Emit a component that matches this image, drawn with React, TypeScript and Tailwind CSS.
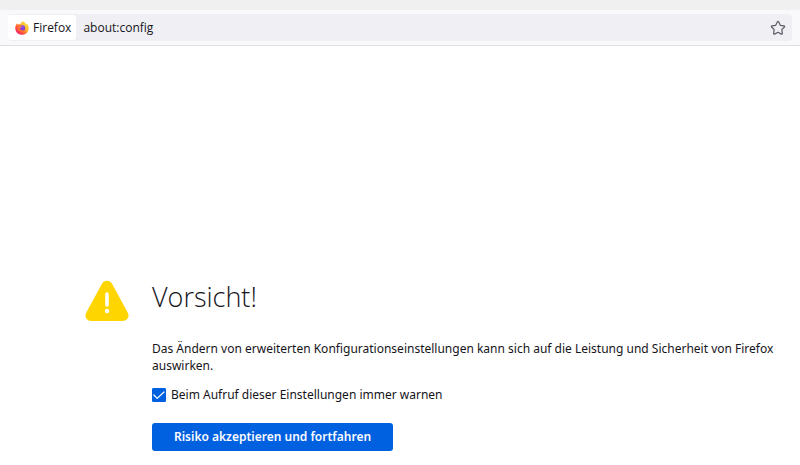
import { useState } from 'react';

const FirefoxLogo = () => (
  <svg viewBox="0 0 28 28" className="size-[14px] shrink-0" aria-hidden>
    <defs>
      <linearGradient id="flame" x1="0.9" y1="0.1" x2="0.15" y2="0.9">
        <stop offset="0" stopColor="#ffe44a" />
        <stop offset="0.4" stopColor="#ffb52b" />
        <stop offset="0.7" stopColor="#ff5a3a" />
        <stop offset="1" stopColor="#f0226e" />
      </linearGradient>
      <radialGradient id="globe" cx="0.5" cy="0.3" r="0.75">
        <stop offset="0" stopColor="#9059ff" />
        <stop offset="1" stopColor="#6a2fb8" />
      </radialGradient>
    </defs>
    <path
      d="M16.500 .5c3 2 5.400 4.500 6 7 1-.6 1.300-1.500 1.300-2.500 2.200 2.500 3.700 5.500 3.700 9.300C27.500 21.800 21.500 27.500 14 27.500S.5 21.800.5 14.300C.5 10.500 2 6.500 4.200 4.300c0 1.200.3 2.200.8 2.900 1.500-.8 3.500-.9 5-.2C11.500 4 13.500 1.800 16.500.5z"
      fill="url(#flame)"
    />
    <circle cx="14.500" cy="14.200" r="5.800" fill="url(#globe)" />
    <path
      d="M5 8.500c2.500-1.500 4.500-1 6 .3 1 .9 2 1 3.500 1.200-.3 1.600-1.800 2-3 2.400-.8 1.400-1.600 1.900-1.300 3.300.5 2 2.400 2.900 4.300 2.700 1.500-.2 2.500-1 3.800-.5-1.500 2.500-5 3.700-8 2.700C6.500 19.300 4 14 5 8.500z"
      fill="#ff7139"
    />
  </svg>
);

const StarIcon = () => (
  <svg viewBox="0 0 16 16" className="size-4" fill="none" stroke="#5b5b66" strokeWidth="1.200" strokeLinejoin="round" aria-hidden>
    <path d="M7.400 1.700a.7.7 0 0 1 1.200 0L10.300 5.300l3.700.5a.7.7 0 0 1 .4 1.200L11.800 9.700l.6 3.700a.7.7 0 0 1-1 .7L8 12.300l-3.400 1.800a.7.7 0 0 1-1-.7l.6-3.700L1.600 7A.7.7 0 0 1 2 5.800l3.700-.5z" />
  </svg>
);

const WarningIcon = () => (
  <svg viewBox="0 0 44 42" className="h-[42px] w-11 shrink-0" aria-hidden>
    <path
      d="M16.800 3.900C19.200-.3 24.800-.3 27.200 3.900l15.600 28.800c2.200 4-.6 8.300-5 8.300H6.200c-4.400 0-7.200-4.300-5-8.300z"
      fill="#ffd500"
    />
    <path d="M22 14v11" stroke="#fff" strokeWidth="3.600" strokeLinecap="round" />
    <circle cx="22" cy="31" r="2.200" fill="#fff" />
  </svg>
);

const AddressBar = () => {
  const [url, setUrl] = useState('about:config');

  return (
    <header className="border-b border-[#dfdfe3] bg-[#f9f9fb] font-['Open_Sans',sans-serif]">
      <div className="h-[10px] bg-[#f0f0f0]" />
      <div className="px-2 py-1">
        <div className="flex h-[27px] items-center rounded bg-[#f0f0f4] pr-1">
          <button type="button" className="flex h-[25px] items-center gap-1 rounded-[3px] bg-white pr-[5px] pl-[7px] text-[12px]">
            <FirefoxLogo />
            Firefox
          </button>
          <input
            type="text"
            value={url}
            onChange={e => setUrl(e.target.value)}
            aria-label="Adresse"
            className="min-w-0 flex-1 bg-transparent px-[7px] text-[12px] outline-none"
          />
          <button type="button" aria-label="Lesezeichen hinzufügen" className="flex size-5 items-center justify-center">
            <StarIcon />
          </button>
        </div>
      </div>
    </header>
  );
};

export default function App() {
  const [warn, setWarn] = useState(true);

  return (
    <div className="min-h-screen bg-white font-['Noto_Sans',sans-serif] text-[12px] text-[#15141a]">
      <AddressBar />
      <main className="flex gap-[23px] pt-[234px] pr-2 pl-[85px]">
        <WarningIcon />
        <div className="min-w-0 flex-1">
          <h1 className="font-['Open_Sans',sans-serif] text-[27px] leading-[34px] font-light">Vorsicht!</h1>
          <p className="mt-[26px] leading-[17px]">
            Das Ändern von erweiterten Konfigurationseinstellungen kann sich auf die Leistung und Sicherheit von Firefox
            auswirken.
          </p>
          <label className="mt-3 flex w-fit items-center gap-[5px] leading-[18px]">
            <span className="relative flex size-[14px]">
              <input
                type="checkbox"
                checked={warn}
                onChange={e => setWarn(e.target.checked)}
                className="peer size-[14px] appearance-none rounded-[1px] border border-[#8f8f9d] checked:border-[#0061e0] checked:bg-[#0061e0]"
              />
              <svg
                viewBox="0 0 14 14"
                className="pointer-events-none absolute inset-0 hidden size-[14px] peer-checked:block"
                fill="none"
                stroke="#fff"
                strokeWidth="1.200"
                strokeLinecap="round"
                strokeLinejoin="round"
                aria-hidden
              >
                <path d="M1.800 7l3.400 3.400L12 4" />
              </svg>
            </span>
            Beim Aufruf dieser Einstellungen immer warnen
          </label>
          <button type="button" className="mt-[19px] h-7 rounded-[3px] bg-[#0061e0] px-[22px] font-semibold text-[#fbfbfe]">
            Risiko akzeptieren und fortfahren
          </button>
        </div>
      </main>
    </div>
  );
}
